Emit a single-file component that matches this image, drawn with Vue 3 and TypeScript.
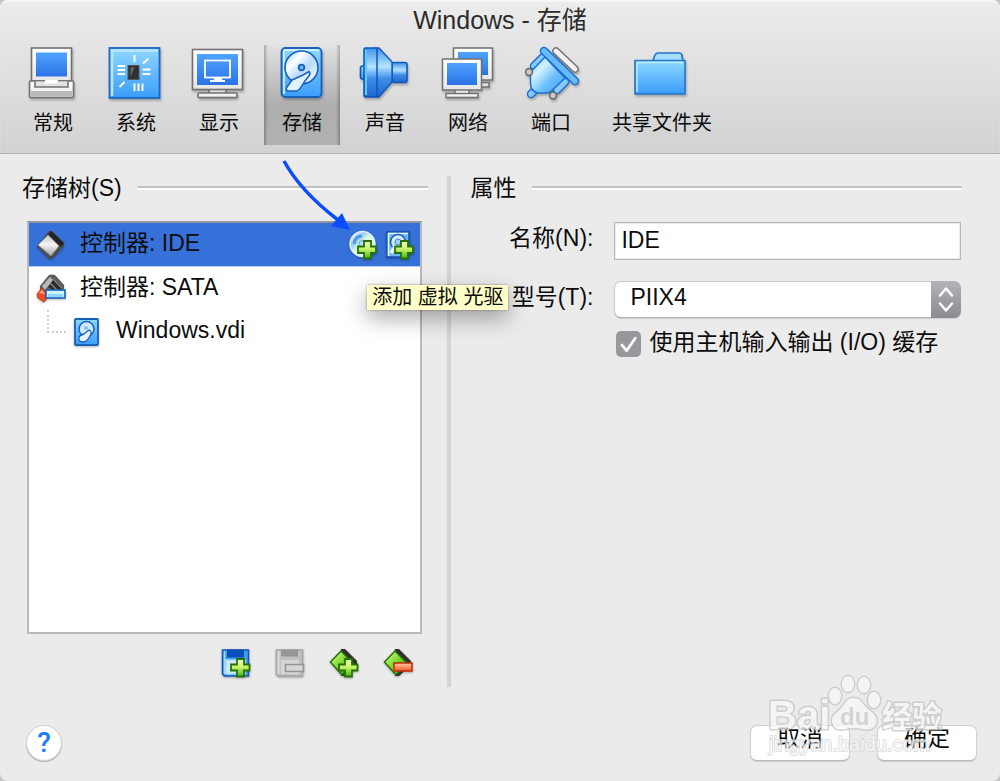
<script setup lang="ts">
import { ref } from 'vue'

interface Section {
  id: string
  label: string
}

const sections: Section[] = [
  { id: 'general', label: '常规' },
  { id: 'system', label: '系统' },
  { id: 'display', label: '显示' },
  { id: 'storage', label: '存储' },
  { id: 'audio', label: '声音' },
  { id: 'network', label: '网络' },
  { id: 'ports', label: '端口' },
  { id: 'folders', label: '共享文件夹' },
]

const active = ref<string>('storage')
const name = ref<string>('IDE')
const model = ref<string>('PIIX4')
const hostCache = ref<boolean>(true)
</script>

<template>
  <div class="window">
    <svg class="defs" width="0" height="0" aria-hidden="true">
      <defs>
        <linearGradient id="screen" x1="0" y1="0" x2="0" y2="1">
          <stop offset="0" stop-color="#4fa4ff" /><stop offset="1" stop-color="#2b72e6" />
        </linearGradient>
        <linearGradient id="sky" x1="0" y1="0" x2="0" y2="1">
          <stop offset="0" stop-color="#8ed8ff" /><stop offset="1" stop-color="#3b9dfb" />
        </linearGradient>
        <linearGradient id="plug" x1="0" y1="0" x2="1" y2="1">
          <stop offset="0.1" stop-color="#8ed4ff" /><stop offset=".32" stop-color="#d4f1ff" />
          <stop offset=".6" stop-color="#6fc0fc" /><stop offset="1" stop-color="#3b9dfb" />
        </linearGradient>
        <linearGradient id="shell" x1="0" y1="0" x2="0" y2="1">
          <stop offset="0" stop-color="#ffffff" /><stop offset="1" stop-color="#e6e6e6" />
        </linearGradient>
        <linearGradient id="horn" x1="0" y1="0" x2="0" y2="1">
          <stop offset="0" stop-color="#3f92ea" /><stop offset=".38" stop-color="#b5e4ff" />
          <stop offset=".62" stop-color="#3f8fe8" /><stop offset="1" stop-color="#1f66cc" />
        </linearGradient>
        <linearGradient id="disc" x1="0" y1="0" x2="1" y2="1">
          <stop offset="0" stop-color="#8cc5ff" /><stop offset=".3" stop-color="#ffffff" />
          <stop offset=".55" stop-color="#b8d9ff" /><stop offset="1" stop-color="#ffffff" />
        </linearGradient>
        <linearGradient id="cd" x1="0" y1="0" x2="1" y2="1">
          <stop offset="0" stop-color="#ffffff" /><stop offset=".3" stop-color="#9bc8f4" />
          <stop offset=".5" stop-color="#dcffe0" /><stop offset="1" stop-color="#cfe4ff" />
        </linearGradient>
        <linearGradient id="green" x1="0" y1="0" x2="1" y2="1">
          <stop offset="0" stop-color="#e4ffb0" /><stop offset=".5" stop-color="#74d823" /><stop offset="1" stop-color="#2f9a08" />
        </linearGradient>
        <linearGradient id="plus" x1="0" y1="0" x2="0" y2="1">
          <stop offset="0" stop-color="#f4ffb8" /><stop offset=".45" stop-color="#c9f56d" /><stop offset="1" stop-color="#43b40d" />
        </linearGradient>
        <linearGradient id="silver" x1="0" y1="0" x2="0" y2="1">
          <stop offset="0" stop-color="#c4c4c4" /><stop offset=".45" stop-color="#f4f4f4" /><stop offset="1" stop-color="#a6a6a6" />
        </linearGradient>
        <linearGradient id="red" x1="0" y1="0" x2="0" y2="1">
          <stop offset="0" stop-color="#ffc9a8" /><stop offset="1" stop-color="#f1562a" />
        </linearGradient>
      </defs>
    </svg>

    <header class="header">
      <h1>Windows - 存储</h1>
      <nav class="tabs">
        <button
          v-for="s in sections"
          :key="s.id"
          type="button"
          class="tab"
          :class="{ active: s.id === active }"
          @click="active = s.id"
        >
          <svg class="icon" viewBox="0 0 56 56" aria-hidden="true">
            <g v-if="s.id === 'general'" stroke="#707070" stroke-width="1.6">
              <rect x="6.5" y="3" width="40" height="33" fill="url(#shell)" />
              <rect x="11" y="7.500" width="31" height="24" fill="url(#screen)" stroke="none" />
              <rect x="4.500" y="36" width="44" height="16.500" rx="1" fill="url(#shell)" />
              <rect x="6" y="46" width="41" height="5.500" fill="#b9b9b9" stroke="none" />
              <path d="M10 36.500v5.500h33v-5.500" fill="#e3e3e3" />
              <rect x="20" y="35" width="13" height="3.500" fill="#fff" stroke="none" />
            </g>
            <g v-else-if="s.id === 'system'">
              <rect x="1.500" y="3" width="50" height="50" fill="url(#sky)" stroke="#1c66c4" stroke-width="1.800" />
              <path d="M4 51V5.500H50" fill="none" stroke="#b9e7ff" stroke-width="2.500" />
              <rect x="20" y="20.500" width="11" height="14" fill="#303030" stroke="#555" />
              <path d="M22.500 32V23l4-1z" fill="#686868" />
              <path d="M26.500 10v7M35 18.500l5.500-5M9.500 21h7.500M9.500 25h7.500M9.500 29h7.500M34.500 24.500h8M34.500 29h8M11.500 42l5-5M26.500 38.500v7.500M30.500 38.500v7.500M34.500 38.500v7.500" fill="none" stroke="#fff" stroke-width="1.900" />
            </g>
            <g v-else-if="s.id === 'display'" stroke="#707070" stroke-width="1.600">
              <rect x="18" y="44" width="17" height="6" fill="#ddd" />
              <rect x="7" y="48" width="39" height="4.500" rx="1" fill="url(#shell)" />
              <rect x="1.500" y="4.500" width="50" height="40" fill="url(#shell)" />
              <rect x="6" y="9" width="41" height="31" fill="url(#screen)" stroke="none" />
              <rect x="14" y="15.500" width="25" height="17" fill="none" stroke="#fff" stroke-width="1.800" />
              <path d="M23 33h8v2h3v2H19v-2h4z" fill="#fff" stroke="none" />
            </g>
            <g v-else-if="s.id === 'storage'" stroke="#1761bd" stroke-width="1.800" stroke-linejoin="round">
              <rect x="7.500" y="3" width="40" height="49" rx="4" fill="url(#sky)" />
              <path d="M10 49V6q0-1 1-1h34" fill="none" stroke="#cdeeff" />
              <circle cx="27.500" cy="22.500" r="16.500" fill="url(#disc)" stroke-width="1.600" />
              <circle cx="27.500" cy="22.500" r="2.800" fill="#6db5fa" />
              <path d="M35 26.500q2 2-.5 5l-4 5q-5 9-8 9.500H14q-3-1-1-4l5-7 11-5z" fill="#e0f1ff" stroke-width="1.500" />
            </g>
            <g v-else-if="s.id === 'audio'" stroke="#0e57bd" stroke-width="1.600" stroke-linejoin="round">
              <rect x="3.500" y="21" width="6" height="13" rx="2" fill="url(#sky)" />
              <rect x="35" y="17.500" width="15" height="20" rx="2" fill="url(#horn)" />
              <path d="M18 3h4l13 14v20L22 52h-4z" fill="url(#horn)" stroke-width="1.300" />
              <rect x="7" y="3" width="13" height="49" rx="1.500" fill="url(#horn)" stroke-width="1.500" />
              <path d="M9 5v45" stroke="#60c7ff" stroke-width="2" />
            </g>
            <g v-else-if="s.id === 'network'" stroke="#707070" stroke-width="1.500">
              <rect x="34" y="37.500" width="15" height="4.500" fill="#ddd" />
              <rect x="13.500" y="3" width="39" height="32" fill="url(#shell)" />
              <rect x="18" y="7" width="30" height="23" fill="url(#screen)" stroke="none" />
              <rect x="15" y="44" width="14" height="6" fill="#eee" />
              <rect x="6" y="48.500" width="32" height="4" fill="url(#shell)" />
              <rect x="2.500" y="14" width="39" height="31" fill="url(#shell)" />
              <rect x="7" y="18" width="30" height="22" fill="url(#screen)" stroke="none" />
            </g>
            <g v-else-if="s.id === 'ports'" stroke-linecap="round" stroke-linejoin="round">
              <path d="M33 6l19 18" stroke="#707070" stroke-width="7.500" />
              <path d="M33 6l19 18" stroke="#f1f1f1" stroke-width="4.800" />
              <path d="M19 13l-8 8M42 37l-8 8M12 45l-4 4" stroke="#1e6fcd" stroke-width="8.500" />
              <path d="M19 13l-8 8M42 37l-8 8M12 45l-4 4" stroke="#86cbff" stroke-width="5.500" />
              <path d="M22 12L9.500 25q-2 2-2 5v8q0 9 8 10h8q3 0 5-2L42 33z" fill="url(#plug)" stroke="#1e6fcd" stroke-width="1.500" />
              <path d="M21 6l31 30" stroke="#1e6fcd" stroke-width="8.500" />
              <path d="M21 6l31 30" stroke="#69b9fb" stroke-width="5.500" />
              <circle cx="6" cy="27" r="3.400" fill="#c9c9c9" stroke="#666" stroke-width="1.500" />
              <circle cx="30" cy="50.500" r="3.400" fill="#c9c9c9" stroke="#666" stroke-width="1.500" />
            </g>
            <g v-else stroke="#2474c8" stroke-width="1.600" stroke-linejoin="round">
              <path d="M18 18l3-8q1-2 3-2h21q3 0 3 3l1 6z" fill="#a4dfff" />
              <rect x="1" y="15.500" width="50" height="33.500" fill="url(#sky)" />
              <path d="M3 47V17.500h46" fill="none" stroke="#b9edff" stroke-width="1.500" />
            </g>
          </svg>
          <span>{{ s.label }}</span>
        </button>
      </nav>
    </header>

    <main class="main">
      <section class="column">
        <div class="heading"><h2>存储树(S)</h2><i class="rule"></i></div>
        <div class="tree">
          <ul>
            <li class="row selected">
              <svg class="small" viewBox="0 0 30 30" aria-hidden="true">
                <path d="M13 1h3l12 12v3L16 29h-3L1 17z" fill="#4c4c4c" />
                <path d="M15 1l13 12-3 4L12 4z" fill="#242424" />
                <path d="M12 5l11 11-8 10L2 15z" fill="url(#silver)" stroke="#8a8a8a" stroke-linejoin="round" />
              </svg>
              <span class="grow">控制器: IDE</span>
              <button type="button" class="tool" aria-label="添加虚拟光驱">
                <svg class="small" viewBox="0 0 30 30" aria-hidden="true">
                  <circle cx="14.500" cy="14" r="12.500" fill="url(#cd)" stroke="#dff1ff" stroke-width="1.500" />
                  <path d="M6 14q1-8 8-8" fill="none" stroke="#4a9ce6" stroke-width="3" />
                  <circle cx="14.500" cy="14" r="3.500" fill="#b8e1ff" stroke="#69a7df" />
                  <path d="M16 11h7v5.500h5v6.500h-5v5.500h-7V23h-6v-6.500h6z" fill="url(#plus)" stroke="#267008" stroke-width="1.800" />
                </svg>
              </button>
              <button type="button" class="tool" aria-label="添加虚拟硬盘">
                <svg class="small" viewBox="0 0 30 30" aria-hidden="true">
                  <rect x="2" y="2" width="22" height="25" fill="#69b7fa" stroke="#174fae" stroke-width="1.500" />
                  <path d="M3.500 26V3.500H23" fill="none" stroke="#e6f6ff" stroke-width="1.500" />
                  <circle cx="13" cy="12" r="7.500" fill="#d7ebff" stroke="#1761bd" stroke-width="1.600" />
                  <circle cx="13" cy="12" r="3" fill="#9bcfff" stroke="#3b86db" />
                  <path d="M6 23l4-6" stroke="#eaf6ff" stroke-width="4" />
                  <path d="M16 11h7v5.500h5v6.500h-5v5.500h-7V23h-6v-6.500h6z" fill="url(#plus)" stroke="#267008" stroke-width="1.800" />
                </svg>
              </button>
            </li>
            <li class="row">
              <svg class="small" viewBox="0 0 30 30" aria-hidden="true">
                <path d="M13 1q3-1 6 0l9 10v5l-6 5H9L4 15v-3z" fill="#5c5c5c" />
                <path d="M6 12l8-9 3 3-8 10z" fill="#b9b9b9" />
                <path d="M12 13l6-8 8 8-4 6z" fill="#2b2b2b" />
                <path d="M17 5l9 9M14 9l7 7" stroke="#8b8b8b" stroke-width="1.200" />
                <path d="M1 20l5-6 7 8-5 6-6-4z" fill="#f44a26" stroke="#c73a1c" />
                <path d="M3 19l3-3 3 4z" fill="#ffae90" />
                <rect x="10" y="16" width="19" height="8" fill="#c9f2ff" stroke="#1761bd" stroke-width="1.600" />
                <rect x="12" y="20" width="15" height="3" fill="#8ad9fd" />
              </svg>
              <span class="grow">控制器: SATA</span>
            </li>
            <li class="row child">
              <i class="branch"></i>
              <svg class="small" viewBox="0 0 30 30" aria-hidden="true">
                <rect x="3" y="2" width="23" height="26" rx="1" fill="url(#sky)" stroke="#1761bd" stroke-width="1.800" />
                <circle cx="14.500" cy="12" r="7.500" fill="#d1e9ff" stroke="#1761bd" stroke-width="1.500" />
                <path d="M17 13q4 2 1 6-3 6-7 6-5 0-4-5 1-2 5-3z" fill="#e5f4ff" stroke="#1761bd" stroke-width="1.300" />
                <circle cx="14" cy="11" r="2" fill="#82c0fa" />
              </svg>
              <span class="grow">Windows.vdi</span>
            </li>
          </ul>
          <svg class="arrow" width="76" height="76" viewBox="0 0 76 76" aria-hidden="true">
            <path d="M4 4C16 26 36 46 58 63" fill="none" stroke="#0a4cff" stroke-width="3.500" />
            <path d="M70 73L51 69 62 56z" fill="#0a4cff" />
          </svg>
          <div class="tooltip" role="tooltip">添加 虚拟 光驱</div>
        </div>
        <div class="tools">
          <button type="button" class="tool" aria-label="添加控制器">
            <svg class="small" viewBox="0 0 30 30" aria-hidden="true">
              <path d="M1.500 2h26v26h-24l-2-2z" fill="#3c9cf5" stroke="#1457b0" stroke-width="1.500" />
              <rect x="6" y="1.500" width="17" height="8" fill="#0a50b8" />
              <path d="M3.500 3v23M5 12h19v14H5z" fill="#cfeaff" stroke="#a4d9ff" stroke-width="1.500" />
              <path d="M16 11h7v5.500h5.500v6H23v6h-7v-6h-6v-6h6z" fill="url(#plus)" stroke="#267008" stroke-width="1.800" />
            </svg>
          </button>
          <button type="button" class="tool" aria-label="删除控制器" disabled>
            <svg class="small" viewBox="0 0 30 30" aria-hidden="true">
              <path d="M1.500 2h26v26h-24l-2-2z" fill="#c1c1c1" stroke="#a6a6a6" stroke-width="1.500" />
              <rect x="6" y="1.500" width="17" height="7" fill="#969696" />
              <path d="M3.500 3v23" stroke="#e2e2e2" stroke-width="1.500" />
              <path d="M6 12h18v14H6z" fill="#d6d6d6" />
              <rect x="10.500" y="16.500" width="18" height="7" fill="#d6d6d6" stroke="#929292" stroke-width="1.500" />
            </svg>
          </button>
          <button type="button" class="tool" aria-label="添加附件">
            <svg class="small" viewBox="0 0 30 30" aria-hidden="true">
              <path d="M12 1h4l12 12v4L16 28h-4z" fill="#303030" />
              <path d="M12 3l12 12-11 12L1.500 14z" fill="url(#green)" stroke="#267008" stroke-width="1.500" />
              <path d="M16 11h7v5.500h5.500v6H23v6h-7v-6h-6v-6h6z" fill="url(#plus)" stroke="#267008" stroke-width="1.800" />
            </svg>
          </button>
          <button type="button" class="tool" aria-label="删除附件">
            <svg class="small" viewBox="0 0 30 30" aria-hidden="true">
              <path d="M12 1h4l12 12v4L16 28h-4z" fill="#303030" />
              <path d="M12 3l12 12-11 12L1.500 14z" fill="url(#green)" stroke="#267008" stroke-width="1.500" />
              <rect x="11" y="15" width="18" height="8" fill="url(#red)" stroke="#bd3212" stroke-width="1.600" />
            </svg>
          </button>
        </div>
      </section>

      <i class="divider"></i>

      <section class="column">
        <div class="heading"><h2>属性</h2><i class="rule"></i></div>
        <form class="form" @submit.prevent>
          <label for="name">名称(N):</label>
          <input id="name" v-model="name" class="text" type="text" />
          <label for="model">型号(T):</label>
          <div class="stack select">
            <select id="model" v-model="model">
              <option>PIIX3</option>
              <option>PIIX4</option>
              <option>ICH6</option>
            </select>
            <svg class="stepper" viewBox="0 0 30 36" aria-hidden="true">
              <path d="M9 14l6-7 6 7M9 22l6 7 6-7" fill="none" stroke="#fff" stroke-width="2.500" stroke-linecap="round" stroke-linejoin="round" />
            </svg>
          </div>
          <div class="check">
            <span class="stack">
              <input id="cache" v-model="hostCache" type="checkbox" />
              <svg v-if="hostCache" class="tick" viewBox="0 0 26 26" aria-hidden="true">
                <path d="M6 14l5 6 9-13" fill="none" stroke="#fff" stroke-width="2.800" stroke-linecap="round" stroke-linejoin="round" />
              </svg>
            </span>
            <label for="cache">使用主机输入输出 (I/O) 缓存</label>
          </div>
        </form>
      </section>
    </main>

    <footer class="footer">
      <button type="button" class="help" aria-label="帮助">?</button>
      <button type="button" class="push">取消</button>
      <button type="button" class="push">确定</button>
      <svg class="watermark" width="184" height="88" viewBox="0 0 184 88" aria-hidden="true">
        <g fill="#f8f8f8" stroke="#c4c4c4" stroke-width="3" stroke-linejoin="round" opacity=".75" paint-order="stroke">
          <text x="3" y="57" class="brand" font-size="40">Bai</text>
          <ellipse cx="70" cy="24" rx="6" ry="8" />
          <ellipse cx="83" cy="12" rx="6" ry="8" />
          <ellipse cx="99" cy="13" rx="6" ry="8" />
          <ellipse cx="109" cy="28" rx="6" ry="8" />
          <path d="M89 26q6 0 9 6 4 5 10 9 6 6 2 13-4 5-12 3-9-2-18 0-9 2-12-4-3-7 3-12 6-5 9-10 3-5 9-5z" />
          <text x="75" y="53" class="brand" font-size="24" fill="#cccccc" stroke="none">du</text>
          <text x="117" y="55" class="brand" font-size="30">经验</text>
          <text x="4" y="79" class="brand light" font-size="20" stroke-width="2" stroke="#d6d6d6">jingyan.baidu.com</text>
        </g>
      </svg>
    </footer>
  </div>
</template>

<style>
html,
body {
  margin: 0;
  background: #c6c6c6;
}
</style>

<style scoped>
* {
  box-sizing: border-box;
}
.window {
  display: flex;
  flex-direction: column;
  min-height: 100vh;
  background: #ebebeb;
  border-radius: 8px;
  overflow: hidden;
  color: #0c0c0c;
  font-family: "Liberation Sans", "Noto Sans CJK SC", sans-serif;
  font-size: 23px;
  line-height: 24px;
}
.defs {
  position: absolute;
}
button,
input,
select {
  font: inherit;
  color: inherit;
  margin: 0;
}
h1,
h2 {
  margin: 0;
  font-weight: 400;
}
.header {
  height: 154px;
  border-bottom: 1px solid #b2b2b2;
  box-shadow: inset 0 2px 1px #f8f8f8;
  background: linear-gradient(#ececec, #d2d2d2);
}
h1 {
  padding-top: 5px;
  font-size: 25px;
  line-height: 30px;
  text-align: center;
  color: #2c2c2c;
}
.tabs {
  display: flex;
  gap: 7px;
  padding: 10px 15px 0;
}
.tab {
  display: flex;
  flex-direction: column;
  align-items: center;
  gap: 8px;
  min-width: 76px;
  height: 100px;
  padding: 0;
  border: 0;
  background: none;
  font-size: 20px;
  line-height: 28px;
  white-space: nowrap;
}
.tab:last-child {
  padding: 0 16px;
}
.tab.active {
  background:
    linear-gradient(90deg, rgba(0, 0, 0, 0.25), transparent 4px, transparent calc(100% - 4px), rgba(0, 0, 0, 0.25)),
    linear-gradient(#e2e2e2, #aeaeae 60%, #b2b2b2);
}
.icon {
  width: 56px;
  height: 56px;
  overflow: visible;
  filter: drop-shadow(1px 2px 1px rgba(0, 0, 0, 0.25));
}
.main {
  flex: 1;
  display: grid;
  grid-template-columns: 406fr 4px 491fr;
  column-gap: 19px;
  padding: 22px 38px 0 22px;
}
.column {
  display: flex;
  flex-direction: column;
  min-width: 0;
}
.divider {
  background: #d4d4d4;
}
.heading {
  display: flex;
  align-items: center;
  gap: 16px;
}
.heading h2 {
  font-size: 23px;
  line-height: 24px;
}
.rule {
  flex: 1;
  height: 4px;
  border-top: 2px solid #c0c0c0;
  border-bottom: 2px solid #fff;
}
.tree {
  position: relative;
  flex: 1;
  margin: 21px 6px 0 5px;
  border: 2px solid #b9b9b9;
  border-top-color: #939799;
  background: #fff;
}
ul {
  margin: 0;
  padding: 0;
  list-style: none;
}
.row {
  display: flex;
  align-items: center;
  height: 43px;
  padding: 0 5px 0 7px;
}
.row.selected {
  height: 44px;
  background: #3571d8;
  border-bottom: 1px solid #b4cdf3;
}
.row.child {
  padding-left: 18px;
}
.grow {
  flex: 1;
  padding: 0 0 3px 14px;
}
.branch {
  align-self: flex-start;
  width: 19px;
  height: 23px;
  margin-right: 6px;
  border-left: 2px dotted #cfcfcf;
  border-bottom: 2px dotted #cfcfcf;
}
.small {
  display: block;
  width: 30px;
  height: 30px;
  filter: drop-shadow(0 1px 1px rgba(0, 0, 0, 0.3));
}
.tool {
  padding: 0;
  border: 0;
  background: none;
}
.tool + .tool {
  margin-left: 7px;
}
.arrow {
  position: absolute;
  right: 64px;
  top: -66px;
}
.tooltip {
  position: absolute;
  z-index: 2;
  top: 62px;
  right: -88px;
  padding: 0 5px;
  background: #ffffc7;
  box-shadow: 0 0 2px rgba(0, 0, 0, 0.4), 0 8px 22px rgba(0, 0, 0, 0.35);
  font-size: 20px;
  line-height: 25px;
  white-space: nowrap;
}
.tools {
  display: flex;
  justify-content: flex-end;
  padding: 14px 15px 9px 0;
}
.tools .tool + .tool {
  margin-left: 24px;
}
.form {
  display: grid;
  grid-template-columns: 123px 1fr;
  column-gap: 21px;
  padding: 22px 1px 0 0;
}
.form > label {
  line-height: 32px;
  text-align: right;
}
.text {
  width: 100%;
  height: 38px;
  margin-bottom: 21px;
  padding: 0 6px 2px;
  border: 1px solid #b8b8b8;
  border-radius: 0;
  background: #fff;
  box-shadow: inset 0 0 0 1px #ececec;
  outline: 0;
}
.stack {
  display: grid;
}
.stack > * {
  grid-area: 1 / 1;
}
.select {
  height: 37px;
  margin-bottom: 12px;
}
select {
  appearance: none;
  width: 100%;
  padding: 0 40px 5px 15px;
  border: 1px solid #cacaca;
  border-bottom-color: #b0b0b0;
  border-radius: 7px;
  background: #fff;
  box-shadow: 0 1px 1px rgba(0, 0, 0, 0.12);
}
.stepper {
  justify-self: end;
  width: 30px;
  height: 37px;
  border-radius: 0 7px 7px 0;
  background: linear-gradient(#b4b3b8, #8b8a90);
  pointer-events: none;
}
.check {
  grid-column: 2;
  display: flex;
  align-items: flex-start;
  gap: 8px;
  padding-left: 2px;
  white-space: nowrap;
}
.check .stack {
  padding-top: 1px;
}
.check input {
  appearance: none;
  width: 25px;
  height: 26px;
  border-radius: 5px;
  background: #98979c;
}
.tick {
  width: 25px;
  height: 26px;
  pointer-events: none;
}
.footer {
  position: relative;
  display: flex;
  align-items: center;
  gap: 27px;
  padding: 38px 23px 20px 26px;
}
.help {
  width: 36px;
  height: 36px;
  margin-right: auto;
  padding: 0;
  border: 1px solid #d2d2d2;
  border-radius: 50%;
  background: #fff;
  box-shadow: 0 1px 1px rgba(0, 0, 0, 0.25);
  color: #147efb;
  font-family: Roboto, "Liberation Sans", sans-serif;
  font-size: 28px;
  font-weight: 500;
}
.push {
  width: 100px;
  height: 36px;
  padding: 0 0 10px;
  border: 1px solid #d0d0d0;
  border-bottom-color: #b8b8b8;
  border-radius: 7px;
  background: #fff;
  box-shadow: 0 1px 1px rgba(0, 0, 0, 0.12);
}
.watermark {
  position: absolute;
  right: 51px;
  bottom: 21px;
  pointer-events: none;
}
.brand {
  font-family: "Liberation Sans", "Noto Sans CJK SC", sans-serif;
  font-weight: 700;
}
.brand.light {
  font-weight: 400;
}
</style>
